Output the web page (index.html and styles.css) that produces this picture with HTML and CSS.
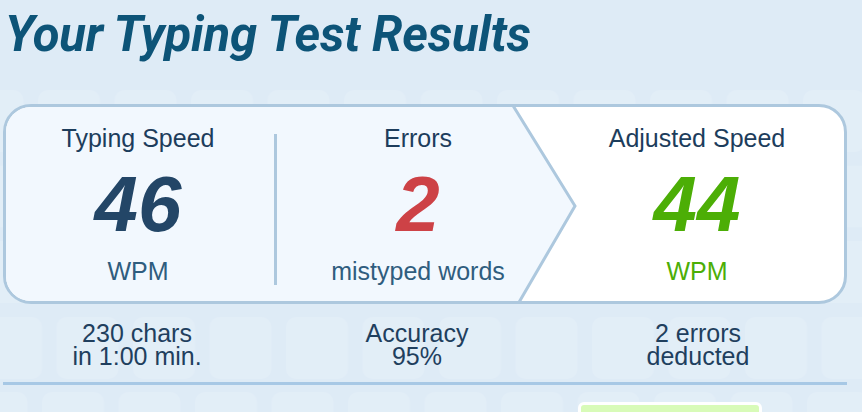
FILE: index.html
```html
<!DOCTYPE html>
<html>
<head>
<meta charset="utf-8">
<link rel="stylesheet" href="styles.css">
</head>
<body>
<svg class="keys-bg" width="862" height="412" viewBox="0 0 862 412" aria-hidden="true">
  <defs>
    <pattern id="r1" x="-38.5" y="90" width="76.5" height="80" patternUnits="userSpaceOnUse"><rect width="62" height="62" rx="10"/></pattern>
    <pattern id="r2" x="-10" y="165.5" width="76.5" height="80" patternUnits="userSpaceOnUse"><rect width="62" height="62" rx="10"/></pattern>
    <pattern id="r3" x="-25" y="241" width="76.5" height="80" patternUnits="userSpaceOnUse"><rect width="62" height="62" rx="10"/></pattern>
    <pattern id="r4" x="-20" y="317" width="76.5" height="80" patternUnits="userSpaceOnUse"><rect width="62" height="62" rx="10"/></pattern>
    <pattern id="r5" x="-34.5" y="392" width="76.5" height="80" patternUnits="userSpaceOnUse"><rect width="62" height="62" rx="10"/></pattern>
  </defs>
  <rect x="0" y="90" width="862" height="62" fill="url(#r1)"/>
  <rect x="0" y="165.5" width="862" height="62" fill="url(#r2)"/>
  <rect x="0" y="241" width="862" height="62" fill="url(#r3)"/>
  <rect x="0" y="317" width="862" height="62" fill="url(#r4)"/>
  <rect x="0" y="392" width="862" height="20" fill="url(#r5)"/>
</svg>

<main class="page">
  <h1 class="title">Your Typing Test Results</h1>

  <section class="card">
    <svg class="chevron" width="838" height="194" viewBox="0 0 838 194" aria-hidden="true">
      <polygon points="0,0 507,0 569,99 513,194 0,194" fill="#f2f8fe"/>
      <polyline points="506,-3 569,99 512,197" fill="none" stroke="#adc8de" stroke-width="3"/>
    </svg>
    <div class="col col-first">
      <div class="label">Typing Speed</div>
      <div class="num num-speed">46</div>
      <div class="unit">WPM</div>
    </div>
    <div class="divider"></div>
    <div class="col">
      <div class="label">Errors</div>
      <div class="num num-errors">2</div>
      <div class="unit">mistyped words</div>
    </div>
    <div class="col">
      <div class="label">Adjusted Speed</div>
      <div class="num num-adjusted">44</div>
      <div class="unit unit-green">WPM</div>
    </div>
  </section>

  <section class="stats">
    <div class="stat"><div class="stat-line">230 chars</div><div class="stat-line">in 1:00 min.</div></div>
    <div class="stat"><div class="stat-line">Accuracy</div><div class="stat-line">95%</div></div>
    <div class="stat"><div class="stat-line">2 errors</div><div class="stat-line">deducted</div></div>
  </section>

  <hr class="rule">

  <div class="actions">
    <div class="green-box"></div>
  </div>
</main>
</body>
</html>
```

FILE: styles.css
```css
html, body {
  margin: 0;
  padding: 0;
}

body {
  width: 862px;
  height: 412px;
  overflow: hidden;
  background: #deebf6;
  font-family: "Liberation Sans", Arial, sans-serif;
  position: relative;
}

.keys-bg {
  position: absolute;
  left: 0;
  top: 0;
  fill: rgba(255, 255, 255, 0.13);
  z-index: 0;
}

.page {
  position: relative;
  z-index: 1;
}

.title {
  margin: 0;
  padding: 8px 0 0 5px;
  height: 54px;
  font-family: Roboto, "Open Sans", sans-serif;
  font-style: italic;
  font-weight: 700;
  font-size: 49px;
  line-height: 54px;
  letter-spacing: -0.2px;
  color: #0d5478;
  white-space: nowrap;
}

.card {
  position: relative;
  box-sizing: border-box;
  margin: 42px 0 0 3px;
  width: 844px;
  height: 200px;
  border: 3px solid #adc8de;
  border-radius: 28px;
  background: #ffffff;
  overflow: hidden;
  display: grid;
  grid-template-columns: 268px 3px 282px 276px;
  align-items: start;
}

.chevron {
  position: absolute;
  left: 0;
  top: 0;
  z-index: 0;
}

.col {
  position: relative;
  z-index: 1;
  display: flex;
  flex-direction: column;
  align-items: center;
  padding-top: 16px;
}

.col-first {
  padding-right: 4px;
}

.divider {
  position: relative;
  z-index: 1;
  margin-top: 27px;
  height: 151px;
  background: #adc8de;
}

.label {
  font-size: 25px;
  line-height: 30px;
  color: #1d3d5c;
  white-space: nowrap;
}

.num {
  margin-top: 11px;
  font-size: 78px;
  line-height: 80px;
  font-weight: 700;
  font-style: italic;
}

.num-speed {
  color: #234667;
}

.num-errors {
  color: #cd4246;
}

.num-adjusted {
  color: #4cae06;
}

.unit {
  margin-top: 12px;
  font-size: 25px;
  line-height: 30px;
  color: #2f5d7e;
  white-space: nowrap;
}

.unit-green {
  color: #4cae06;
}

.stats {
  margin-top: 18px;
  display: grid;
  grid-template-columns: 274px 286px 276px;
}

.stat {
  text-align: center;
  color: #1f3f5e;
  white-space: nowrap;
}

.stat-line {
  font-size: 25px;
  line-height: 23px;
  height: 23px;
}

.rule {
  margin: 14px 0 0 3px;
  width: 844px;
  height: 3px;
  border: 0;
  background: #a7c8e5;
}

.actions {
  margin-top: 17px;
  padding-left: 578px;
}

.green-box {
  box-sizing: border-box;
  width: 184px;
  height: 40px;
  border: 3px solid #ffffff;
  border-radius: 6px;
  background: #d8fbb8;
}
```
